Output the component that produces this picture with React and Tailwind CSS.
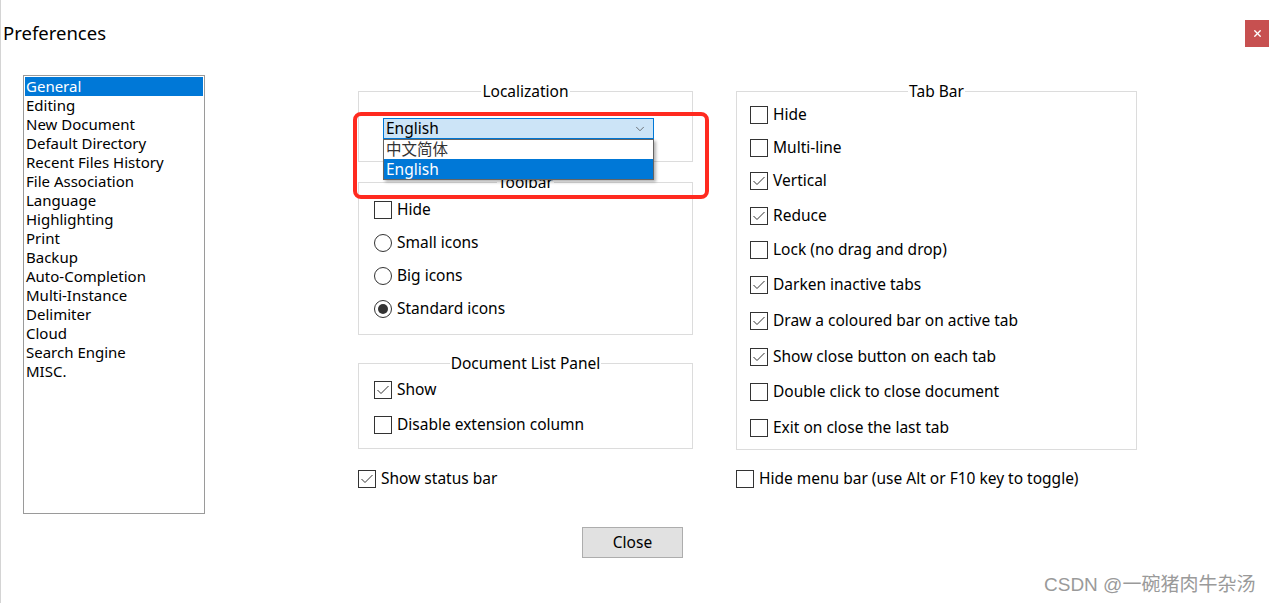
import { X, ChevronDown } from 'lucide-react'

const PAGES = [
  'General', 'Editing', 'New Document', 'Default Directory', 'Recent Files History',
  'File Association', 'Language', 'Highlighting', 'Print', 'Backup', 'Auto-Completion',
  'Multi-Instance', 'Delimiter', 'Cloud', 'Search Engine', 'MISC.',
]

const TAB_BAR = [
  { label: 'Hide', checked: false, gap: 'mt-[4px]' },
  { label: 'Multi-line', checked: false, gap: 'mt-[13px]' },
  { label: 'Vertical', checked: true, gap: 'mt-[13px]' },
  { label: 'Reduce', checked: true, gap: 'mt-[15px]' },
  { label: 'Lock (no drag and drop)', checked: false, gap: 'mt-[14px]' },
  { label: 'Darken inactive tabs', checked: true, gap: 'mt-[15px]' },
  { label: 'Draw a coloured bar on active tab', checked: true, gap: 'mt-[16px]' },
  { label: 'Show close button on each tab', checked: true, gap: 'mt-[16px]' },
  { label: 'Double click to close document', checked: false, gap: 'mt-[15px]' },
  { label: 'Exit on close the last tab', checked: false, gap: 'mt-[16px]' },
]

function Checkbox({ checked, label, className = '' }) {
  return (
    <div className={`flex items-center h-[20px] ${className}`}>
      <span className="w-[18px] h-[18px] border border-[#333] bg-white flex items-center justify-center shrink-0">
        {checked && (
          <svg width="14" height="14" viewBox="0 0 14 14">
            <polyline points="1.5,7 5,10.5 12.5,3" fill="none" stroke="#333" strokeWidth="1" />
          </svg>
        )}
      </span>
      <span className="ml-[5px] whitespace-nowrap">{label}</span>
    </div>
  )
}

function Radio({ checked, label }) {
  return (
    <div className="flex items-center h-[33px]">
      <span className="w-[18px] h-[18px] rounded-full border border-[#333] bg-white flex items-center justify-center shrink-0">
        {checked && <span className="w-[10px] h-[10px] rounded-full bg-[#333]" />}
      </span>
      <span className="ml-[5px] whitespace-nowrap">{label}</span>
    </div>
  )
}

function Group({ title, className = '', children }) {
  return (
    <fieldset className={`border border-[#dcdcdc] ${className}`}>
      <legend className="mx-auto px-[1px] leading-[19px]">{title}</legend>
      {children}
    </fieldset>
  )
}

export default function App() {
  return (
    <div className="relative w-[1269px] h-[603px] bg-white border-l border-[#d4d4d4] text-[15.5px] text-black overflow-hidden"
      style={{ fontFamily: '"Noto Sans", "Noto Sans CJK SC", sans-serif' }}>
      {/* title bar */}
      <div className="flex justify-between h-[75px]">
        <div className="pl-[2px] pt-[20px] text-[18.5px] leading-[26px]">Preferences</div>
        <button className="mt-[20px] w-[24px] h-[27px] bg-[#c75050] flex items-center justify-center">
          <X size={11} strokeWidth={3} color="#fff" />
        </button>
      </div>

      <div className="flex items-start">
        {/* page list */}
        <div className="ml-[22px] w-[182px] h-[439px] border border-[#9a9a9a] p-[1px] text-[15px]">
          {PAGES.map((p, i) => (
            <div key={p} className={`h-[19px] leading-[18px] pl-[1px] ${i === 0 ? 'bg-[#0078d7] text-white' : ''}`}>
              {p}
            </div>
          ))}
        </div>

        {/* middle column */}
        <div className="ml-[153px] w-[335px]">
          <Group title="Localization" className="mt-[7px]">
            <div className="pl-[24px] pb-[22px]">
              <div className="relative mt-[17px] w-[271px]">
                <div className="h-[21px] bg-[#cce4f7] border border-[#0078d7] flex items-center justify-between pl-[2px] pr-[6px]">
                  <span className="leading-[19px]">English</span>
                  <ChevronDown size={14} strokeWidth={1.2} color="#444" />
                </div>
                <div className="absolute left-0 top-full w-full bg-white border border-[#646464] shadow-[2px_2px_3px_rgba(0,0,0,0.3)] z-10">
                  <div className="h-[19px] leading-[19px] pl-[2px] text-[#333]">中文简体</div>
                  <div className="h-[20px] leading-[20px] pl-[2px] bg-[#0078d7] text-white">English</div>
                </div>
              </div>
            </div>
          </Group>

          <Group title="Toolbar" className="mt-[11px]">
            <div className="pl-[15px] pt-[1px] pb-[9px]">
              <div className="flex items-center h-[33px]">
                <Checkbox label="Hide" />
              </div>
              <Radio label="Small icons" />
              <Radio label="Big icons" />
              <Radio label="Standard icons" checked />
            </div>
          </Group>

          <Group title="Document List Panel" className="mt-[19px]">
            <div className="pl-[15px] pb-[5px]">
              <div className="flex items-center h-[34px]">
                <Checkbox label="Show" checked />
              </div>
              <div className="flex items-center h-[36px]">
                <Checkbox label="Disable extension column" />
              </div>
            </div>
          </Group>

          <Checkbox label="Show status bar" checked className="mt-[20px]" />
        </div>

        {/* right column */}
        <div className="ml-[43px] w-[401px]">
          <Group title="Tab Bar" className="mt-[7px]">
            <div className="pl-[13px] pb-[11px]">
              {TAB_BAR.map((t) => (
                <Checkbox key={t.label} label={t.label} checked={t.checked} className={t.gap} />
              ))}
            </div>
          </Group>
          <Checkbox label="Hide menu bar (use Alt or F10 key to toggle)" className="mt-[19px]" />
        </div>
      </div>

      <div className="pl-[581px] mt-[13px]">
        <button className="w-[101px] h-[31px] bg-[#e1e1e1] border border-[#adadad] leading-[29px]">Close</button>
      </div>

      {/* annotation overlay */}
      <div className="absolute left-[352px] top-[112px] w-[356px] h-[87px] border-[4px] border-[#ff2a1f] rounded-[8px] pointer-events-none z-20" />

      {/* watermark */}
      <div className="absolute left-[1043px] top-[571px] text-[19px] text-[#9a9a9a] whitespace-nowrap"
        style={{ fontFamily: '"Liberation Sans", "Noto Sans CJK SC", sans-serif' }}>
        CSDN @一碗猪肉牛杂汤
      </div>
    </div>
  )
}
